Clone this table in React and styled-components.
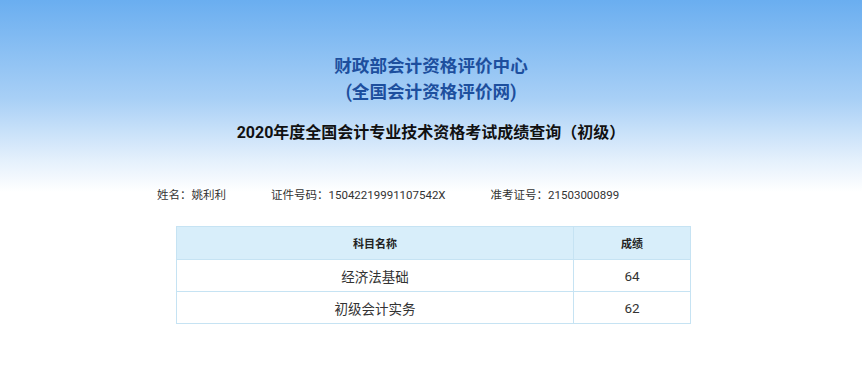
import React from "react";
import styled, { createGlobalStyle } from "styled-components";

const GlobalStyle = createGlobalStyle`
  html, body {
    margin: 0;
    padding: 0;
    background: #fff;
  }
  body {
    font-family: Roboto, "Noto Sans CJK SC", sans-serif;
  }
`;

const Page = styled.div`
  width: 862px;
  height: 384px;
  overflow: hidden;
  background: linear-gradient(to bottom, #6aaef0 0px, #a9d0f6 100px, #e4f0fc 160px, #ffffff 192px);
`;

const Header = styled.div`
  padding-top: 53px;
  text-align: center;
`;

const OrgTitle = styled.h1`
  margin: 0;
  font-size: 17.6px;
  line-height: 26px;
  font-weight: 700;
  color: #1d4f9e;
`;

const ExamTitle = styled.h2`
  margin: 16px 0 0;
  font-size: 16px;
  line-height: 24px;
  font-weight: 700;
  color: #111;
`;

const InfoRow = styled.div`
  display: flex;
  gap: 45px;
  margin-top: 41px;
  padding-left: 157px;
  font-size: 11.5px;
  line-height: 18px;
  color: #333;
`;

const Table = styled.table`
  margin: 22px 0 0 176px;
  width: 512px;
  border-collapse: collapse;
  table-layout: fixed;
`;

const HeadCell = styled.th`
  height: 32px;
  padding: 0;
  background: #d8eefa;
  border: 1px solid #c6e3f3;
  font-size: 11px;
  font-weight: 700;
  color: #222;
  width: ${(p) => p.w}px;
`;

const Cell = styled.td`
  height: 31px;
  padding: 0;
  border: 1px solid #c6e3f3;
  text-align: center;
  font-size: 13.5px;
  color: #333;
`;

const scores = [
  { subject: "经济法基础", score: 64 },
  { subject: "初级会计实务", score: 62 },
];

export default function App() {
  return (
    <Page>
      <GlobalStyle />
      <Header>
        <OrgTitle>
          财政部会计资格评价中心
          <br />
          (全国会计资格评价网)
        </OrgTitle>
        <ExamTitle>2020年度全国会计专业技术资格考试成绩查询（初级）</ExamTitle>
      </Header>
      <InfoRow>
        <span>姓名：姚利利</span>
        <span>证件号码：15042219991107542X</span>
        <span>准考证号：21503000899</span>
      </InfoRow>
      <Table>
        <thead>
          <tr>
            <HeadCell w={396}>科目名称</HeadCell>
            <HeadCell w={116}>成绩</HeadCell>
          </tr>
        </thead>
        <tbody>
          {scores.map((row) => (
            <tr key={row.subject}>
              <Cell>{row.subject}</Cell>
              <Cell>{row.score}</Cell>
            </tr>
          ))}
        </tbody>
      </Table>
    </Page>
  );
}
